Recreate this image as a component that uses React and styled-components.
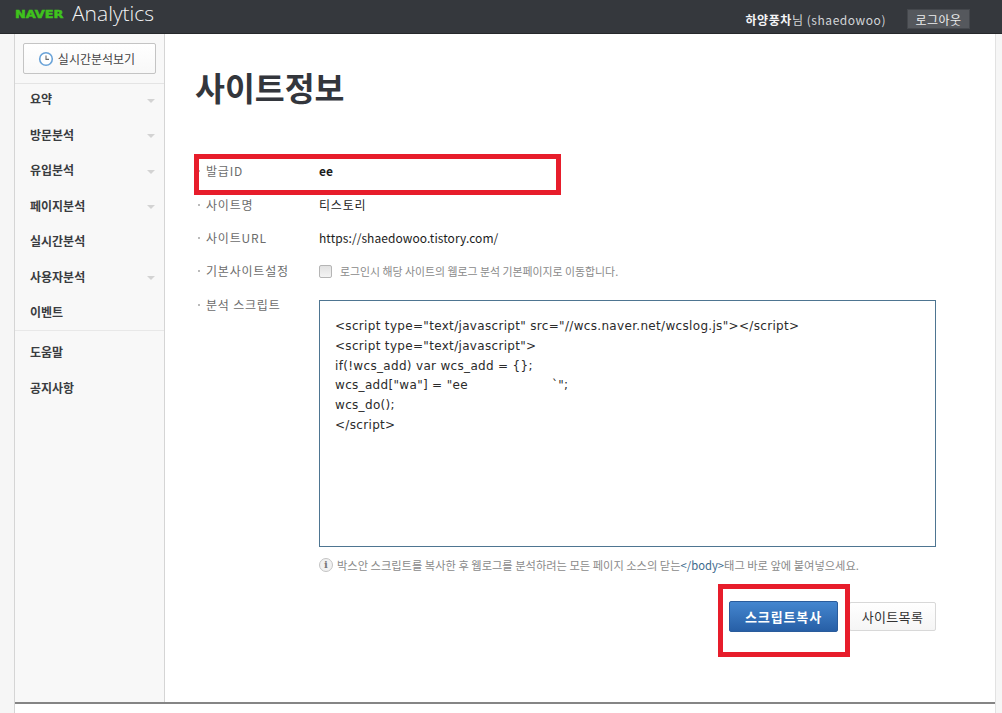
import React from "react";
import styled, { createGlobalStyle } from "styled-components";

const GlobalStyle = createGlobalStyle`
  html, body {
    margin: 0;
    padding: 0;
    height: 100%;
    overflow: hidden;
    background: #fff;
    font-family: "Liberation Sans", "Noto Sans CJK KR", sans-serif;
  }
`;

const Page = styled.div`
  position: relative;
  width: 1002px;
  height: 713px;
  overflow: hidden;
`;

const Header = styled.header`
  height: 34px;
  box-sizing: border-box;
  background: #35383d;
  border-bottom: 1px solid #26282b;
  display: flex;
  align-items: center;
  justify-content: space-between;
  padding: 0 32px 0 15px;
`;

const Logo = styled.div`
  display: flex;
  align-items: center;
  gap: 7px;
  margin-bottom: 8px;
`;

const Naver = styled.span`
  color: #3fc31c;
  font: 900 11px "DejaVu Sans", sans-serif;
  -webkit-text-stroke: 0.5px #3fc31c;
  transform: translateY(2px) scaleX(1.17);
  transform-origin: left center;
  width: 50px;
  white-space: nowrap;
`;

const Analytics = styled.span`
  color: #f2f3f4;
  font: 300 21px "Open Sans", sans-serif;
  line-height: 24px;
`;

const UserArea = styled.div`
  display: flex;
  align-items: center;
  gap: 21px;
  margin-top: 5px;
  font: 12px "Noto Sans CJK KR", sans-serif;
  color: #d3d5d8;
`;

const UserName = styled.span`
  letter-spacing: 0.55px;
  b {
    color: #f4f4f6;
    font-weight: 700;
  }
`;

const Logout = styled.button`
  width: 63px;
  height: 20px;
  padding: 0;
  border: 1px solid #44474c;
  background: #55585d;
  color: #eceded;
  font: 12px "Noto Sans CJK KR", sans-serif;
  letter-spacing: 0.4px;
`;

const Shell = styled.div`
  display: flex;
  height: 679px;
`;

const Gutter = styled.div`
  width: 15px;
  flex: none;
  box-sizing: border-box;
  background: #f6f6f6;
  border-right: 1px solid #d5d5d5;
`;

const RightRail = styled.div`
  width: 7px;
  flex: none;
  box-sizing: border-box;
  background: #f6f6f6;
  border-left: 1px solid #e2e2e2;
`;

const Center = styled.div`
  flex: 1;
  min-width: 0;
`;

const Layout = styled.div`
  display: flex;
  height: 670px;
  box-sizing: border-box;
  border-bottom: 2px solid #858585;
`;

const Sidebar = styled.aside`
  width: 150px;
  flex: none;
  box-sizing: border-box;
  background: #f8f8f8;
  border-right: 1px solid #d5d5d5;
`;

const LiveBox = styled.div`
  padding: 9px 8px;
  border-bottom: 1px solid #e4e4e4;
`;

const LiveButton = styled.button`
  width: 133px;
  height: 31px;
  box-sizing: border-box;
  display: flex;
  align-items: center;
  justify-content: center;
  gap: 4px;
  padding: 0 6px 0 0;
  background: linear-gradient(#fff, #f8f8f8);
  border: 1px solid #c4c4c4;
  border-radius: 2px;
  color: #444;
  font: 12px "Noto Sans CJK KR", sans-serif;
`;

const Menu = styled.ul`
  list-style: none;
  margin: 0;
  padding: ${(p) => (p.$divided ? "0" : "6px 0 0")};
  height: ${(p) => (p.$divided ? "246px" : "auto")};
  border-bottom: ${(p) => (p.$divided ? "1px solid #e8e8e8" : "none")};
`;

const MenuItem = styled.li`
  height: 35.5px;
  box-sizing: border-box;
  display: flex;
  align-items: center;
  justify-content: space-between;
  padding: 0 9px 5px 15px;
  font: 700 12px/1 "Noto Sans CJK KR", sans-serif;
  color: #3a3c40;
`;

const Caret = styled.i`
  width: 0;
  height: 0;
  margin-top: 3px;
  border-left: 4px solid transparent;
  border-right: 4px solid transparent;
  border-top: 4px solid #d3d3d3;
`;

const Main = styled.main`
  flex: 1;
  padding: 0 59px 0 30px;
`;

const Title = styled.h1`
  margin: 0;
  padding-top: 29px;
  height: 120px;
  box-sizing: border-box;
  font: 700 32.5px/48px "Noto Sans CJK KR", sans-serif;
  color: #33363c;
`;

const InfoRow = styled.div`
  display: grid;
  grid-template-columns: 124px 1fr;
  min-height: ${(p) => p.$height}px;
  margin-top: ${(p) => (p.$top ? 8 : 0)}px;
  align-items: ${(p) => (p.$top ? "start" : "center")};
`;

const Label = styled.div`
  font: 12px/18px "Noto Sans CJK KR", sans-serif;
  letter-spacing: 0.8px;
  color: #6c6c6c;
  padding-left: 11px;
  position: relative;
  &::before {
    content: "";
    position: absolute;
    left: 3px;
    top: 8px;
    width: 2px;
    height: 2px;
    background: #bbb;
  }
`;

const Value = styled.div`
  font: ${(p) => (p.$bold ? 700 : 400)} 12px/18px "Noto Sans CJK KR", "Noto Sans", sans-serif;
  letter-spacing: ${(p) => (p.$wide ? 0.8 : 0.07)}px;
  color: #1c1c1c;
`;

const CheckLine = styled.label`
  display: flex;
  align-items: center;
  gap: 8px;
  font: 10.9px/18px "Noto Sans CJK KR", sans-serif;
  color: #8a8a8a;
`;

const CheckBox = styled.span`
  width: 11px;
  height: 11px;
  border: 1px solid #b5b5b5;
  border-radius: 2px;
  background: linear-gradient(#e2e2e2, #f3f3f3);
`;

const ScriptColumn = styled.div`
  padding-top: 4px;
`;

const ScriptBox = styled.pre`
  margin: 0;
  width: 617px;
  height: 247px;
  box-sizing: border-box;
  padding: 16px 15px;
  border: 1px solid #4e7591;
  font: 12px/19.8px "DejaVu Sans", sans-serif;
  letter-spacing: 0.32px;
  color: #2b2b2b;
  background: #fff;
  overflow: hidden;
`;

const Hint = styled.p`
  display: flex;
  align-items: center;
  gap: 4px;
  margin: 9px 0 0;
  font: 11.25px/18px "Noto Sans CJK KR", sans-serif;
  color: #8a8a8a;
  white-space: nowrap;
  em {
    font-style: normal;
    color: #3d6a8c;
  }
`;

const InfoIcon = styled.span`
  width: 12px;
  height: 12px;
  border: 1px solid #c4c4c4;
  border-radius: 50%;
  background: #f1f1f1;
  color: #777;
  font: 700 10px/12px "DejaVu Serif", serif;
  text-align: center;
`;

const Actions = styled.div`
  display: flex;
  justify-content: flex-end;
  align-items: center;
  gap: 11px;
  width: 617px;
  margin-top: 27px;
`;

const ActionButton = styled.button`
  box-sizing: border-box;
  padding: 0;
  border-radius: 2px;
  font: ${(p) => (p.$primary ? 700 : 400)} 13px "Noto Sans CJK KR", sans-serif;
  letter-spacing: ${(p) => (p.$primary ? 0.9 : 0.3)}px;
  width: ${(p) => (p.$primary ? 109 : 87)}px;
  height: ${(p) => (p.$primary ? 31 : 29)}px;
  color: ${(p) => (p.$primary ? "#fff" : "#333")};
  background: ${(p) =>
    p.$primary ? "linear-gradient(#4486cf, #275fa6)" : "linear-gradient(#fff, #f5f5f5)"};
  border: 1px solid ${(p) => (p.$primary ? "#2a5c9c" : "#d8d8d8")};
`;

// red annotation boxes drawn on top of the capture
const Callout = styled.div`
  position: absolute;
  box-sizing: border-box;
  border: 5px solid #e71d2b;
  left: ${(p) => p.$x}px;
  top: ${(p) => p.$y}px;
  width: ${(p) => p.$w}px;
  height: ${(p) => p.$h}px;
`;

const Masked = styled.span`
  display: inline-block;
  width: ${(p) => p.$w}px;
`;

const Clock = () => (
  <svg width="16" height="16" viewBox="0 0 16 16" fill="none">
    <circle cx="8" cy="8" r="6.3" fill="#fff" stroke="#6aa3d8" strokeWidth="1.6" />
    <path d="M8 4.5V8.4H11" stroke="#6b6b6b" strokeWidth="1.1" />
  </svg>
);

const topMenu = [
  ["요약", true],
  ["방문분석", true],
  ["유입분석", true],
  ["페이지분석", true],
  ["실시간분석", false],
  ["사용자분석", true],
  ["이벤트", false],
];

const App = () => {
  return (
    <Page>
      <GlobalStyle />
      <Header>
        <Logo>
          <Naver>NAVER</Naver>
          <Analytics>Analytics</Analytics>
        </Logo>
        <UserArea>
          <UserName>
            <b>하양풍차</b>님 (shaedowoo)
          </UserName>
          <Logout>로그아웃</Logout>
        </UserArea>
      </Header>
      <Shell>
        <Gutter />
        <Center>
          <Layout>
            <Sidebar>
              <LiveBox>
                <LiveButton>
                  <Clock />
                  실시간분석보기
                </LiveButton>
              </LiveBox>
              <Menu $divided>
                {topMenu.map(([name, more]) => (
                  <MenuItem key={name}>
                    {name}
                    {more && <Caret />}
                  </MenuItem>
                ))}
              </Menu>
              <Menu>
                <MenuItem>도움말</MenuItem>
                <MenuItem>공지사항</MenuItem>
              </Menu>
            </Sidebar>
            <Main>
              <Title>사이트정보</Title>
              <InfoRow $height={34}>
                <Label>발급ID</Label>
                <Value $bold>ee</Value>
              </InfoRow>
              <InfoRow $height={33}>
                <Label>사이트명</Label>
                <Value $wide>티스토리</Value>
              </InfoRow>
              <InfoRow $height={33}>
                <Label>사이트URL</Label>
                <Value>https://shaedowoo.tistory.com/</Value>
              </InfoRow>
              <InfoRow $height={34}>
                <Label>기본사이트설정</Label>
                <CheckLine>
                  <CheckBox />
                  로그인시 해당 사이트의 웹로그 분석 기본페이지로 이동합니다.
                </CheckLine>
              </InfoRow>
              <InfoRow $top>
                <Label>분석 스크립트</Label>
                <ScriptColumn>
                  <ScriptBox>
                    {'<script type="text/javascript" src="//wcs.naver.net/wcslog.js"></script>\n'}
                    {'<script type="text/javascript">\n'}
                    {"if(!wcs_add) var wcs_add = {};\n"}
                    {'wcs_add["wa"] = "ee'}
                    <Masked $w={84} />
                    {'`";\n'}
                    {"wcs_do();\n"}
                    {"</script>"}
                  </ScriptBox>
                  <Hint>
                    <InfoIcon>i</InfoIcon>
                    <span>
                      박스안 스크립트를 복사한 후 웹로그를 분석하려는 모든 페이지 소스의 닫는
                      <em>&lt;/body&gt;</em>태그 바로 앞에 붙여넣으세요.
                    </span>
                  </Hint>
                  <Actions>
                    <ActionButton $primary>스크립트복사</ActionButton>
                    <ActionButton>사이트목록</ActionButton>
                  </Actions>
                </ScriptColumn>
              </InfoRow>
            </Main>
          </Layout>
        </Center>
        <RightRail />
      </Shell>
      <Callout $x={194} $y={154} $w={367} $h={41} />
      <Callout $x={718} $y={584} $w={132} $h={73} />
    </Page>
  );
};

export default App;
